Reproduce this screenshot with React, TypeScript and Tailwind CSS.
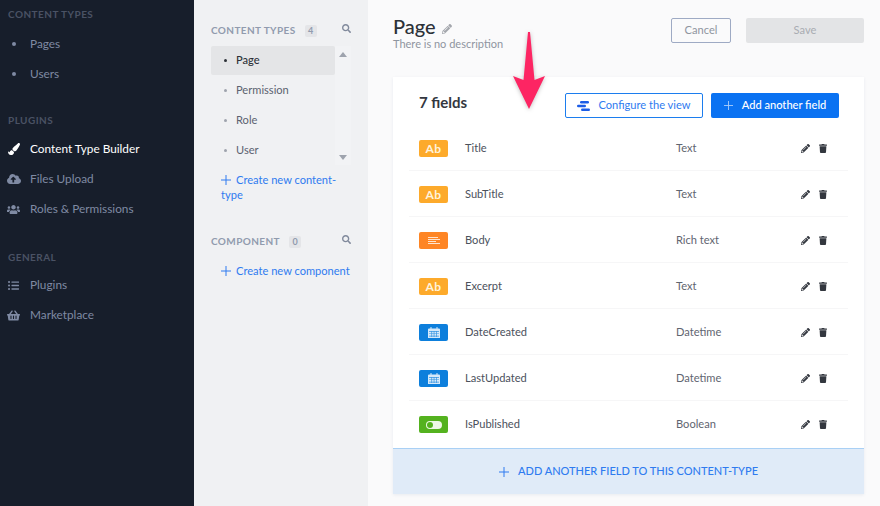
import { FaPaintBrush, FaCloudUploadAlt, FaUsers, FaListUl, FaShoppingBasket, FaSearch, FaPencilAlt, FaTrash } from "react-icons/fa";
import type { ReactNode } from "react";

const FIELDS = [
  { name: "Title", type: "Text", kind: "text" },
  { name: "SubTitle", type: "Text", kind: "text" },
  { name: "Body", type: "Rich text", kind: "rich" },
  { name: "Excerpt", type: "Text", kind: "text" },
  { name: "DateCreated", type: "Datetime", kind: "date" },
  { name: "LastUpdated", type: "Datetime", kind: "date" },
  { name: "IsPublished", type: "Boolean", kind: "bool" },
];

function Plus({ className }: { className: string }) {
  return (
    <svg viewBox="0 0 11 11" className={className} fill="none" stroke="currentColor" strokeWidth="1.1">
      <path d="M5.5 0v11M0 5.5h11" />
    </svg>
  );
}

function SideHeading({ children, className }: { children: ReactNode; className: string }) {
  return <div className={`h-[14px] pl-[8px] text-[10px] leading-[14px] font-bold tracking-[0.45px] text-[#4a5264] ${className}`}>{children}</div>;
}

function SideLink({ icon, label, active }: { icon: ReactNode; label: string; active?: boolean }) {
  return (
    <div className={`flex h-[30px] items-center text-[11.8px] ${active ? "text-white" : "text-[#7f8aa3]"}`}>
      <span className="flex w-[30px] justify-center pr-[3px]">{icon}</span>
      <span>{label}</span>
    </div>
  );
}

function CalendarGlyph() {
  return (
    <svg viewBox="0 0 12 11" className="h-[11px] w-[12px]">
      <path d="M0 2.5a1 1 0 0 1 1-1h10a1 1 0 0 1 1 1V11H0z" fill="#d5e9fa" />
      <path d="M2.5 0h1v2.5h-1zM8.5 0h1v2.5h-1z" fill="#d5e9fa" />
      <path d="M1 4h10v.7H1zM1 6.4h10v.7H1zM1 8.8h10v.7H1zM3.4 4h.7v6h-.7zM5.7 4h.7v6h-.7zM8 4h.7v6H8z" fill="#0d7fdc" opacity="0.8" />
    </svg>
  );
}

function TypeBadge({ kind }: { kind: string }) {
  if (kind === "text") {
    return <div className="flex h-[17px] w-[29px] items-center justify-center rounded-[2px] bg-[#fdaa2b] pt-[1px] text-[12px] font-bold tracking-[0.5px] text-[#fff3dc]">Ab</div>;
  }
  if (kind === "rich") {
    return (
      <div className="flex h-[17px] w-[29px] flex-col items-center justify-center gap-[1px] rounded-[2px] bg-[#fe8524]">
        <span className="h-[1px] w-[10px] -translate-x-[1px] bg-[#ffe3cc]" />
        <span className="h-[1px] w-[12px] bg-[#ffe3cc]" />
        <span className="h-[1px] w-[8px] -translate-x-[2px] bg-[#ffe3cc]" />
        <span className="h-[1px] w-[12px] bg-[#ffe3cc]" />
      </div>
    );
  }
  if (kind === "date") {
    return (
      <div className="flex h-[17px] w-[29px] items-center justify-center rounded-[2px] bg-[#0d7fdc]">
        <CalendarGlyph />
      </div>
    );
  }
  return (
    <div className="flex h-[17px] w-[29px] items-center justify-center rounded-[2px] bg-[#54b21f]">
      <div className="flex h-[8px] w-[16px] items-center justify-start rounded-full bg-[#eef8e6] pl-[1px]">
        <span className="h-[6px] w-[6px] rounded-full bg-[#54b21f]" />
      </div>
    </div>
  );
}

function ScrollArrow({ up }: { up?: boolean }) {
  return (
    <svg viewBox="0 0 8 5" className="h-[5px] w-[8px] text-[#9ea3ad]" fill="currentColor">
      <path d={up ? "M4 0l4 5H0z" : "M4 5L0 0h8z"} />
    </svg>
  );
}

export default function App() {
  return (
    <div className="relative flex h-[506px] w-[880px] overflow-hidden bg-[#fafafb] font-['Lato',sans-serif]">
      {/* main menu */}
      <aside className="w-[194px] shrink-0 bg-[#171e2b] pt-[7px]">
        <SideHeading className="mb-[8px]">CONTENT TYPES</SideHeading>
        <SideLink icon={<span className="h-[4px] w-[4px] rounded-full bg-[#7f8aa3]" />} label="Pages" />
        <SideLink icon={<span className="h-[4px] w-[4px] rounded-full bg-[#7f8aa3]" />} label="Users" />
        <SideHeading className="mt-[24px] mb-[7px]">PLUGINS</SideHeading>
        <SideLink active icon={<FaPaintBrush className="h-[12px] w-[12px]" />} label="Content Type Builder" />
        <SideLink icon={<FaCloudUploadAlt className="h-[14px] w-[14px]" />} label="Files Upload" />
        <SideLink icon={<FaUsers className="h-[13px] w-[13px]" />} label="Roles & Permissions" />
        <SideHeading className="mt-[26px] mb-[6px]">GENERAL</SideHeading>
        <SideLink icon={<FaListUl className="h-[11px] w-[11px]" />} label="Plugins" />
        <SideLink icon={<FaShoppingBasket className="h-[13px] w-[13px]" />} label="Marketplace" />
      </aside>

      {/* content types column */}
      <div className="w-[174px] shrink-0 bg-[#f0f1f3] pt-[23px] pl-[17px] pr-[16px]">
        <div className="flex h-[15px] items-center text-[10px] font-bold tracking-[0.4px] text-[#919bae]">
          <span>CONTENT TYPES</span>
          <span className="ml-[9px] flex h-[12px] w-[12px] items-center justify-center rounded-[2px] bg-[#e4e5e8] text-[9px] tracking-normal">4</span>
          <FaSearch className="ml-auto mr-[1px] mb-[5px] h-[9px] w-[9px] text-[#818a9c]" />
        </div>
        <div className="mt-[8px] flex">
          <div className="w-[124px] text-[11.1px] text-[#5b6270]">
            {["Page", "Permission", "Role", "User"].map((name, i) => (
              <div key={name} className={`flex items-center ${i === 0 ? "h-[29px] rounded-[2px] bg-[#e4e5e7] font-medium text-[#2c3138]" : "h-[30px]"}`}>
                <span className={`ml-[13px] mr-[9px] h-[3px] w-[3px] rounded-full ${i === 0 ? "bg-[#2c3138]" : "bg-[#9ea3ad]"}`} />
                {name}
              </div>
            ))}
          </div>
          <div className="flex h-[119px] w-[16px] flex-col items-center justify-between bg-[#f2f3f5] pt-[6px] pr-[1px] pb-[5px]">
            <ScrollArrow up />
            <ScrollArrow />
          </div>
        </div>
        <div className="mt-[7px] w-[130px] pl-[10px] text-[11.1px] leading-[15px] text-[#2f7bf0]">
          <Plus className="mr-[5px] inline-block h-[10px] w-[10px] -translate-y-[1px]" />
          Create new content-type
        </div>
        <div className="mt-[32px] flex h-[15px] items-center text-[10px] font-bold tracking-[0.4px] text-[#919bae]">
          <span>COMPONENT</span>
          <span className="ml-[9px] flex h-[12px] w-[12px] items-center justify-center rounded-[2px] bg-[#e4e5e8] text-[9px] tracking-normal">0</span>
          <FaSearch className="ml-auto mr-[1px] mb-[5px] h-[9px] w-[9px] text-[#818a9c]" />
        </div>
        <div className="mt-[14px] flex h-[16px] items-center whitespace-nowrap pl-[10px] text-[11.1px] text-[#2f7bf0]">
          <Plus className="mr-[5px] h-[10px] w-[10px] shrink-0" />
          Create new component
        </div>
      </div>

      {/* editor */}
      <main className="w-[512px] shrink-0 pt-[14px] pl-[25px] pr-[16px]">
        <div className="flex h-[63px] items-start">
          <div>
            <div className="flex h-[24px] items-center text-[20px] font-medium text-[#2c3138]">
              Page
              <FaPencilAlt className="ml-[6px] mt-[6px] h-[10px] w-[10px] text-[#a3a6ac]" />
            </div>
            <div className="text-[11px] leading-[12px] text-[#8f95a0]">There is no description</div>
          </div>
          <div className="ml-auto mt-[4px] flex gap-[15px]">
            <div className="flex h-[25px] w-[60px] items-center justify-center rounded-[2px] border border-[#9eaac4] pb-[1px] text-[11.1px] text-[#8f95a0]">Cancel</div>
            <div className="flex h-[25px] w-[118px] items-center justify-center rounded-[2px] bg-[#e3e4e6] pb-[1px] text-[11.1px] text-[#a9acb2]">Save</div>
          </div>
        </div>

        <section className="bg-white shadow-[0_1px_3px_rgba(30,60,120,0.08)]">
          <div className="flex h-[48px] items-start pl-[26px] pr-[25px]">
            <div className="mt-[15px] text-[15px] leading-[20px] font-bold text-[#333740]">7 fields</div>
            <div className="ml-auto mt-[16px] flex gap-[8px]">
              <div className="flex h-[25px] w-[138px] items-center justify-center rounded-[2px] border border-[#1c7dee] text-[11.1px] text-[#2f7bf0]">
                <svg viewBox="0 0 13 10" className="mr-[8px] h-[10px] w-[13px] fill-[#1c5de7]">
                  <rect x="3" y="0" width="9" height="2.4" rx="1.2" />
                  <rect x="0" y="3.8" width="9" height="2.4" rx="1.2" />
                  <rect x="4" y="7.6" width="9" height="2.4" rx="1.2" />
                </svg>
                Configure the view
              </div>
              <div className="flex h-[25px] w-[128px] items-center justify-center rounded-[2px] bg-[#0a72f2] text-[11.1px] font-medium text-white">
                <Plus className="mr-[9px] h-[9px] w-[9px] text-[#a9cdfa]" />
                Add another field
              </div>
            </div>
          </div>

          <div className="px-[16px]">
            {FIELDS.map((f, i) => (
              <div key={f.name} className={`flex items-center pl-[10px] text-[11.1px] text-[#4b515c] ${i < FIELDS.length - 1 ? "h-[46px] border-b border-[#f6f6f7] pt-[1px]" : "h-[47px]"}`}>
                <TypeBadge kind={f.kind} />
                <span className="ml-[17px] w-[211px]">{f.name}</span>
                <span className="text-[#5f6570]">{f.type}</span>
                <div className="ml-auto mr-[21px] flex items-center gap-[10px] text-[#33373f]">
                  <FaPencilAlt className="h-[9px] w-[9px] translate-x-[1px]" />
                  <FaTrash className="h-[9px] w-[8px]" />
                </div>
              </div>
            ))}
          </div>

          <div className="flex h-[46px] items-center justify-center border-t border-[#a9d0f5] bg-[#e0ebf8] text-[11px] font-medium text-[#2f7bf0]">
            <Plus className="mr-[9px] h-[10px] w-[10px]" />
            ADD ANOTHER FIELD TO THIS CONTENT-TYPE
          </div>
        </section>
      </main>

      {/* annotation arrow drawn over the screenshot */}
      <svg viewBox="0 0 40 80" className="absolute left-[509px] top-[30px] h-[80px] w-[40px] drop-shadow-[0_1px_2px_rgba(0,0,0,0.25)]">
        <path d="M19 2 L21 2 L25.5 50 L36 46 L20 79 L4 46 L14.5 50 Z" fill="#fd2563" />
      </svg>
    </div>
  );
}
